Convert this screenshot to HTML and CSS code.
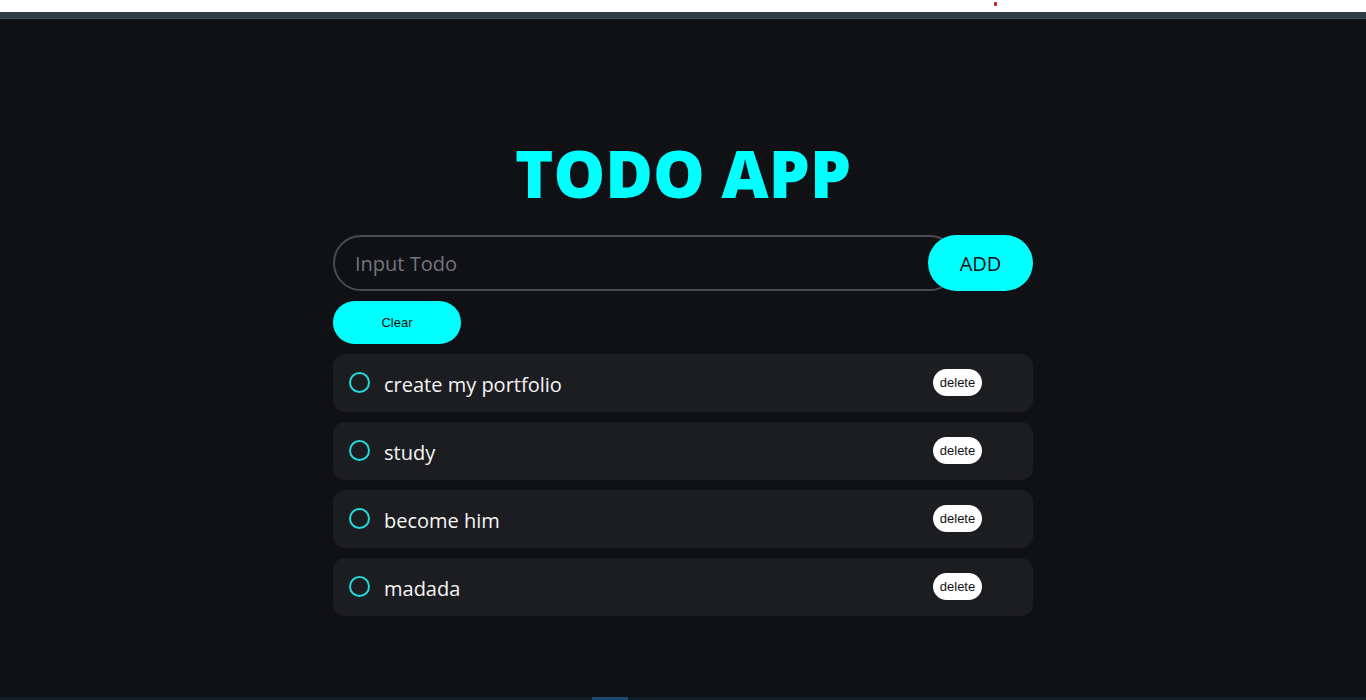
FILE: index.html
```html
<!DOCTYPE html>
<html>
<head>
    <title>Todo App</title>
    <link rel="stylesheet" href="styles.css">
</head>
<body>
    <div class="chrome-top"><span class="dot"></span></div>
    <div class="chrome-bar"></div>
    <main class="app">
        <h1>TODO APP</h1>
        <form class="add-form">
            <input class="todo-input" type="text" placeholder="Input Todo">
            <button class="add-btn" type="button">ADD</button>
        </form>
        <button class="clear-btn" type="button">Clear</button>
        <ul class="todo-list">
            <li class="todo"><span class="check"></span><span class="text">create my portfolio</span><button class="del-btn">delete</button></li>
            <li class="todo"><span class="check"></span><span class="text">study</span><button class="del-btn">delete</button></li>
            <li class="todo"><span class="check"></span><span class="text">become him</span><button class="del-btn">delete</button></li>
            <li class="todo"><span class="check"></span><span class="text">madada</span><button class="del-btn">delete</button></li>
        </ul>
    </main>
    <div class="chrome-bottom"><span class="tab"></span></div>
</body>
</html>
```

FILE: styles.css
```css
html, body {
    margin: 0;
    height: 700px;
    overflow: hidden;
}
body {
    background-color: #0f1115;
    font-family: "Open Sans", "Noto Sans", sans-serif;
    color: #f0f0f0;
    display: flex;
    flex-direction: column;
}
.chrome-top {
    height: 12px;
    background: #ffffff;
    position: relative;
}
.chrome-top .dot {
    position: absolute;
    left: 994px;
    top: 2px;
    width: 3px;
    height: 4px;
    background: #c0202a;
    border-radius: 1px;
}
.chrome-bar {
    height: 6px;
    background: #2c3e44;
    border-bottom: 1px solid #3d5258;
}
.app {
    flex: 1;
    width: 700px;
    margin: 0 auto;
    padding-top: 116px;
}
h1 {
    margin: 0 0 24px;
    text-align: center;
    font-family: "Open Sans", sans-serif;
    font-weight: 800;
    font-size: 65px;
    line-height: 76px;
    color: #00ffff;
}
.add-form {
    display: flex;
    height: 56px;
    margin: 0;
}
.todo-input {
    flex: 1;
    min-width: 0;
    box-sizing: border-box;
    height: 56px;
    margin-right: -30px;
    padding: 0 0 0 20px;
    background: transparent;
    border: 2px solid #4a4b52;
    border-radius: 28px;
    color: #ddd;
    font-family: "Open Sans", sans-serif;
    font-size: 20px;
    outline: none;
}
.todo-input::placeholder {
    color: #74767c;
}
.add-btn {
    width: 105px;
    height: 56px;
    border: none;
    border-radius: 28px;
    background: #00ffff;
    color: #111;
    font-family: "Open Sans", sans-serif;
    font-size: 20px;
    position: relative;
}
.clear-btn {
    display: block;
    margin-top: 10px;
    width: 128px;
    height: 43px;
    border: none;
    border-radius: 22px;
    background: #00ffff;
    color: #111;
    font-family: "Liberation Sans", sans-serif;
    font-size: 13px;
}
.todo-list {
    list-style: none;
    margin: 10px 0 0;
    padding: 0;
    display: flex;
    flex-direction: column;
    gap: 10px;
}
.todo {
    height: 58px;
    box-sizing: border-box;
    display: flex;
    align-items: center;
    padding: 0 51px 0 16px;
    background: #1c1d21;
    border-radius: 12px;
}
.check {
    width: 17px;
    height: 17px;
    border: 2px solid #22d8d8;
    border-radius: 50%;
    margin-right: 14px;
    margin-top: -2px;
}
.text {
    flex: 1;
    font-size: 20px;
    color: #f5f5f5;
    margin-top: 2px;
}
.del-btn {
    width: 49px;
    height: 27px;
    padding: 0;
    border: none;
    border-radius: 14px;
    background: #ffffff;
    color: #111;
    font-family: "Liberation Sans", sans-serif;
    font-size: 13px;
    margin-top: -2px;
}
.chrome-bottom {
    height: 3px;
    background: #0e1f2b;
    position: relative;
}
.chrome-bottom .tab {
    position: absolute;
    left: 592px;
    top: 0;
    width: 36px;
    height: 3px;
    background: #1c4a6e;
}
```
